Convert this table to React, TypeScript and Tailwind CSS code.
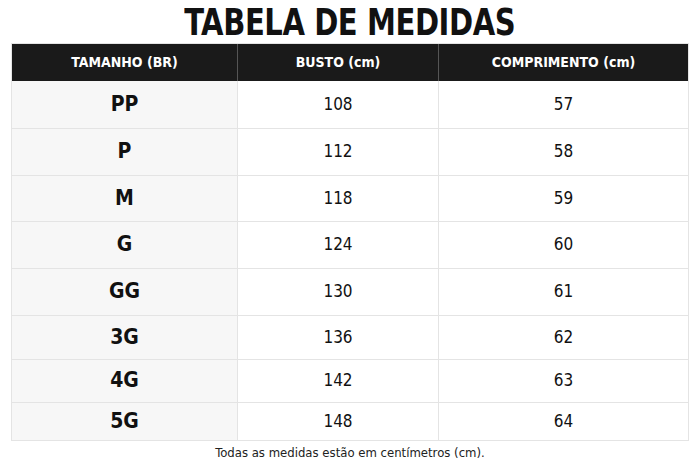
const rows = [
  { size: "PP", busto: "108", comp: "57", h: "h-[47px]" },
  { size: "P", busto: "112", comp: "58", h: "h-[47px]" },
  { size: "M", busto: "118", comp: "59", h: "h-[46px]" },
  { size: "G", busto: "124", comp: "60", h: "h-[47px]" },
  { size: "GG", busto: "130", comp: "61", h: "h-[47px]" },
  { size: "3G", busto: "136", comp: "62", h: "h-[44px]" },
  { size: "4G", busto: "142", comp: "63", h: "h-[43px]" },
  { size: "5G", busto: "148", comp: "64", h: "h-[38px]" },
];

const font = { fontFamily: '"DejaVu Sans Condensed", "Liberation Sans Narrow", "DejaVu Sans", sans-serif' };

export default function App() {
  return (
    <div className="h-[467px] w-[700px] bg-white text-[#111]" style={font}>
      <div className="flex h-[43px] items-center justify-center">
        <h1 className="scale-x-[0.85] text-[38px] font-bold leading-[42px] tracking-[-0.5px]">
          TABELA DE MEDIDAS
        </h1>
      </div>
      <div className="mx-[11px] border border-[#e4e4e4]">
        <div className="grid h-[37px] grid-cols-[226px_201px_1fr] bg-[#1a1a1a] text-[14px] font-bold text-white">
          <div className="flex items-center justify-center border-r border-[#555]">TAMANHO (BR)</div>
          <div className="flex items-center justify-center border-r border-[#555]">BUSTO (cm)</div>
          <div className="flex items-center justify-center">COMPRIMENTO (cm)</div>
        </div>
        {rows.map((r, i) => (
          <div
            key={r.size}
            className={`grid grid-cols-[226px_201px_1fr] ${r.h} ${i > 0 ? "border-t border-[#e4e4e4]" : ""}`}
          >
            <div className="flex items-center justify-center border-r border-[#e4e4e4] bg-[#f7f7f7] text-[21px] font-bold">
              {r.size}
            </div>
            <div className="flex items-center justify-center border-r border-[#e4e4e4] text-[17px]">{r.busto}</div>
            <div className="flex items-center justify-center text-[17px]">{r.comp}</div>
          </div>
        ))}
      </div>
      <p className="mt-[2px] text-center text-[13px] text-[#222]">Todas as medidas estão em centímetros (cm).</p>
    </div>
  );
}
